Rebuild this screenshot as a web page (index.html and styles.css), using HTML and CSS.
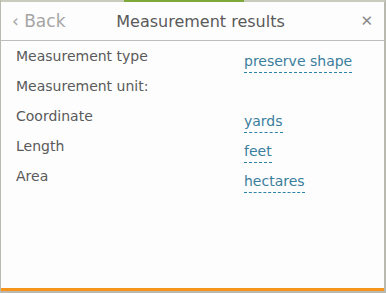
FILE: index.html
```html
<!DOCTYPE html>
<html lang="en">
<head>
  <meta charset="UTF-8">
  <title>Measurement results</title>
  <link rel="stylesheet" href="styles.css">
</head>
<body>
  <div class="map-strip"><span class="green-bar"></span></div>
  <div class="panel">
    <div class="header">
      <span class="back">&#8249; Back</span>
      <span class="title">Measurement results</span>
      <span class="close">&#10005;</span>
    </div>
    <div class="content">
      <div class="row">
        <span class="label">Measurement type</span>
        <span class="value">preserve shape</span>
      </div>
      <div class="row">
        <span class="label">Measurement unit:</span>
      </div>
      <div class="row">
        <span class="label">Coordinate</span>
        <span class="value">yards</span>
      </div>
      <div class="row">
        <span class="label">Length</span>
        <span class="value">feet</span>
      </div>
      <div class="row">
        <span class="label">Area</span>
        <span class="value">hectares</span>
      </div>
    </div>
  </div>
</body>
</html>
```

FILE: styles.css
```css
html, body {
  margin: 0;
  height: 293px;
  overflow: hidden;
}
body {
  font-family: 'DejaVu Sans', Verdana, sans-serif;
  background: #b9b9b0;
  padding: 0 1px;
}
.map-strip {
  height: 2px;
  background: #c9cbbd;
  position: relative;
}
.green-bar {
  position: absolute;
  left: 123px;
  width: 120px;
  top: 0;
  height: 2px;
  background: #7fa83a;
}
.panel {
  background: #fdfdfd;
  height: 286px;
  border-bottom: 3px solid #f7941d;
  width: 383px;
}
.header {
  height: 38px;
  border-bottom: 1px solid #bdbdbd;
  display: flex;
  align-items: center;
  justify-content: space-between;
  padding: 0 11px 0 11px;
}
.back {
  color: #a5a5a5;
  font-size: 17px;
  width: 86px;
}
.title {
  font-size: 16px;
  color: #595959;
}
.close {
  width: 70px;
  text-align: right;
  color: #8a8a8a;
  font-size: 15px;
  font-weight: bold;
}
.content {
  padding: 4px 15px;
}
.row {
  display: flex;
  height: 30px;
  align-items: flex-start;
}
.label {
  width: 228px;
  font-size: 14px;
  color: #5a5a5a;
  line-height: 22px;
}
.value {
  font-size: 14px;
  color: #3b7d9c;
  line-height: 22px;
  margin-top: 5px;
  border-bottom: 1px dashed #2d82a8;
}
```
